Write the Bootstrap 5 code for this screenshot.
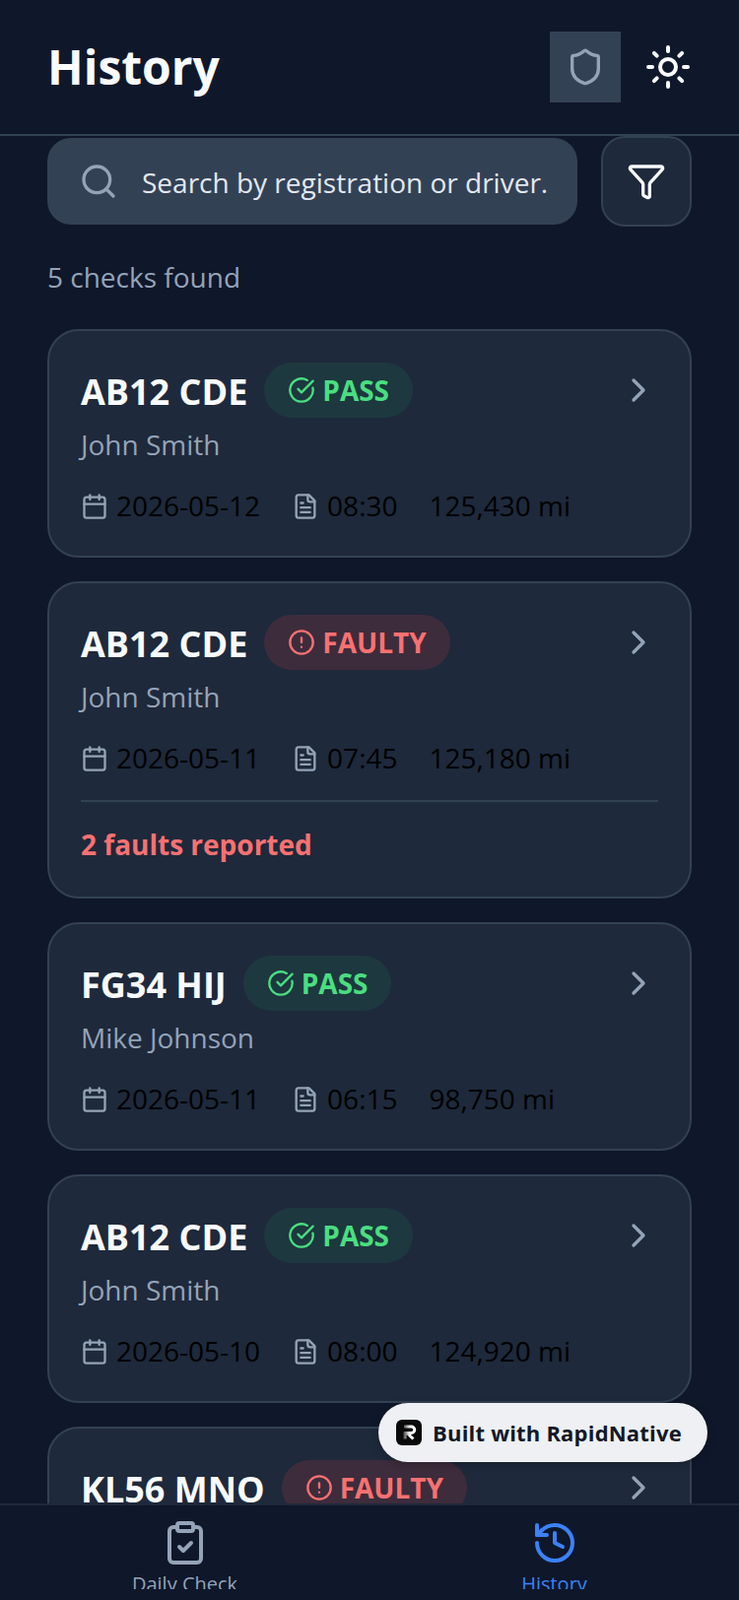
<!DOCTYPE html>
<html lang="en">
<head>
  <meta charset="UTF-8">
  <meta name="viewport" content="width=device-width, initial-scale=1.0">
  <title>History</title>
  <link href="https://cdn.jsdelivr.net/npm/bootstrap@5.3.3/dist/css/bootstrap.min.css" rel="stylesheet" crossorigin="anonymous">
  <script src="https://cdn.jsdelivr.net/npm/bootstrap@5.3.3/dist/js/bootstrap.bundle.min.js" crossorigin="anonymous"></script>
  <style>
    body {
      background: #0f172a;
      font-family: "Open Sans", "Noto Sans", sans-serif;
      color: #000;
      overflow: hidden;
    }
    svg.ico { fill: none; stroke: currentColor; stroke-width: 2; stroke-linecap: round; stroke-linejoin: round; flex-shrink: 0; }

    .app-header { height: 138px; padding: 0 48px; border-bottom: 2px solid #334155; flex-shrink: 0; }
    .app-title { font-size: 48px; line-height: 64px; font-weight: 700; color: #f8fafc; margin: 0; }
    .shield-btn { width: 72px; height: 72px; background: #334155; color: #94a3b8; }
    .sun-ico { color: #f8fafc; }

    .page-scroll { min-height: 0; padding: 0 48px; overflow: hidden; }
    .search-row { gap: 24px; }
    .search-box { height: 88px; margin-top: 2px; background: #334155; border-radius: 24px; padding: 0 30px 0 32px; gap: 24px; color: #94a3b8; }
    .search-box .form-control { background: transparent; border: 0; padding: 2px 0 0; font-size: 28px; line-height: 40px; color: #f1f5f9; box-shadow: none; }
    .search-box .form-control::placeholder { color: #e2e8f0; opacity: 1; }
    .filter-btn { width: 92px; height: 92px; background: #1e293b; border: 2px solid #334155; border-radius: 24px; color: #f8fafc; padding: 0; flex-shrink: 0; }
    .count-line { margin: 31px 0 33px; font-size: 28px; line-height: 40px; color: #94a3b8; }

    .check-card { background: #1e293b; border: 2px solid #334155; border-radius: 32px; padding: 32px; margin-bottom: 24px; color: #000; }
    .reg-text { font-size: 36px; line-height: 48px; font-weight: 700; color: #f8fafc; padding-top: 3px; }
    .status-pill { height: 56px; margin-left: 1px; padding: 0 24px; gap: 7px; border-radius: 28px; font-size: 28px; line-height: 40px; font-weight: 700; }
    .status-pass { background: rgba(34, 197, 94, .1); color: #4ade80; }
    .status-fault { background: rgba(239, 68, 68, .15); color: #f87171; }
    .chev-ico { color: #94a3b8; }
    .driver-text { margin-top: 7px; padding-bottom: 1px; font-size: 28px; line-height: 40px; color: #94a3b8; }
    .meta-row { margin-top: 23px; padding-bottom: 1px; gap: 32px; font-size: 28px; line-height: 36px; }
    .meta-row .ico { color: #94a3b8; margin-top: 2px; }
    .fault-note { margin-top: 24px; padding-top: 23px; padding-bottom: 1px; border-top: 2px solid #334155; font-size: 28px; line-height: 40px; font-weight: 700; color: #f87171; }

    .built-pill { position: absolute; left: 384px; top: 1424px; width: 334px; height: 60px; z-index: 10; background: #eef0f3; border-radius: 30px; gap: 11px; padding-left: 18px; font-size: 22px; letter-spacing: .2px; font-weight: 700; color: #111827; box-shadow: 0 2px 8px rgba(0, 0, 0, .25); }
    .built-logo { width: 26px; height: 26px; background: #0a0a0a; border-radius: 6px; flex-shrink: 0; }

    .tab-bar { height: 98px; background: #0f172a; border-top: 2px solid #1e293b; padding-top: 14px; flex-shrink: 0; }
    .tab-item { height: 71px; overflow: hidden; color: #94a3b8; font-size: 20px; line-height: 28px; }
    .tab-item.active-tab { color: #3b82f6; }
    .tab-item span { margin-top: 4px; }
  </style>
</head>
<body>
  <div class="d-flex flex-column vh-100 position-relative">
    <header class="app-header d-flex align-items-center justify-content-between">
      <h1 class="app-title">History</h1>
      <div class="d-flex align-items-center gap-4">
        <div class="shield-btn d-flex align-items-center justify-content-center">
          <svg class="ico" width="40" height="40" viewBox="0 0 24 24"><path d="M20 13c0 5-3.500 7.500-7.660 8.950a1 1 0 0 1-.67-.01C7.500 20.500 4 18 4 13V6a1 1 0 0 1 1-1c2 0 4.500-1.200 6.240-2.720a1.170 1.170 0 0 1 1.520 0C14.510 3.810 17 5 19 5a1 1 0 0 1 1 1z"/></svg>
        </div>
        <svg class="ico sun-ico" width="48" height="48" viewBox="0 0 24 24"><circle cx="12" cy="12" r="4"/><path d="M12 2v2M12 20v2M4.930 4.930l1.410 1.410M17.660 17.660l1.410 1.410M2 12h2M20 12h2M6.340 17.660l-1.410 1.410M19.070 4.930l-1.410 1.410"/></svg>
      </div>
    </header>

    <main class="page-scroll flex-grow-1">
      <div class="search-row d-flex align-items-start">
        <div class="search-box d-flex align-items-center flex-grow-1">
          <svg class="ico" width="40" height="40" viewBox="0 0 24 24"><circle cx="11" cy="11" r="8"/><path d="m21 21-4.300-4.300"/></svg>
          <input type="text" class="form-control" placeholder="Search by registration or driver...">
        </div>
        <button type="button" class="filter-btn btn d-flex align-items-center justify-content-center">
          <svg class="ico" width="40" height="40" viewBox="0 0 24 24"><path d="M10 20a1 1 0 0 0 .553.895l2 1A1 1 0 0 0 14 21v-7a2 2 0 0 1 .517-1.341L21.740 4.670A1 1 0 0 0 21 3H3a1 1 0 0 0-.742 1.670l7.225 7.989A2 2 0 0 1 10 14z"/></svg>
        </button>
      </div>

      <p class="count-line">5 checks found</p>

      <div id="checkList"></div>
    </main>

    <div class="built-pill d-flex align-items-center">
      <div class="built-logo d-flex align-items-center justify-content-center">
        <svg width="18" height="18" viewBox="0 0 18 18" fill="none"><defs><linearGradient id="logoFade" x1="0" x2="1" y1="0" y2="0"><stop offset="0" stop-color="#555"/><stop offset=".55" stop-color="#fff"/></linearGradient></defs><path d="M4 3h7.500a3 3 0 0 1 0 6.500H7l6.500 6M5 9v6.500" stroke="url(#logoFade)" stroke-width="3"/></svg>
      </div>
      Built with RapidNative
    </div>

    <nav class="tab-bar d-flex">
      <div class="tab-item d-flex flex-column align-items-center w-50">
        <svg class="ico" width="48" height="48" viewBox="0 0 24 24"><rect x="8" y="2" width="8" height="4" rx="1"/><path d="M16 4h2a2 2 0 0 1 2 2v14a2 2 0 0 1-2 2H6a2 2 0 0 1-2-2V6a2 2 0 0 1 2-2h2"/><path d="m9 14 2 2 4-4"/></svg>
        <span>Daily Check</span>
      </div>
      <div class="tab-item active-tab d-flex flex-column align-items-center w-50">
        <svg class="ico" width="48" height="48" viewBox="0 0 24 24"><path d="M3 12a9 9 0 1 0 9-9 9.750 9.750 0 0 0-6.740 2.740L3 8"/><path d="M3 3v5h5"/><path d="M12 7v5l4 2"/></svg>
        <span>History</span>
      </div>
    </nav>
  </div>

  <script>
    const checks = [
      { reg: "AB12 CDE", status: "PASS", driver: "John Smith", date: "2026-05-12", time: "08:30", miles: "125,430 mi" },
      { reg: "AB12 CDE", status: "FAULTY", driver: "John Smith", date: "2026-05-11", time: "07:45", miles: "125,180 mi", faults: "2 faults reported" },
      { reg: "FG34 HIJ", status: "PASS", driver: "Mike Johnson", date: "2026-05-11", time: "06:15", miles: "98,750 mi" },
      { reg: "AB12 CDE", status: "PASS", driver: "John Smith", date: "2026-05-10", time: "08:00", miles: "124,920 mi" },
      { reg: "KL56 MNO", status: "FAULTY", driver: "Sarah Brown", date: "2026-05-10", time: "07:30", miles: "67,210 mi" }
    ];

    const passIcon = '<svg class="ico" width="28" height="28" viewBox="0 0 24 24"><path d="M21.801 10A10 10 0 1 1 17 3.335"/><path d="m9 11 3 3L22 4"/></svg>';
    const faultIcon = '<svg class="ico" width="28" height="28" viewBox="0 0 24 24"><circle cx="12" cy="12" r="10"/><path d="M12 8v4M12 16h.01"/></svg>';
    const calIcon = '<svg class="ico" width="28" height="28" viewBox="0 0 24 24"><path d="M8 2v4M16 2v4"/><rect x="3" y="4" width="18" height="18" rx="2"/><path d="M3 10h18"/></svg>';
    const fileIcon = '<svg class="ico" width="28" height="28" viewBox="0 0 24 24"><path d="M15 2H6a2 2 0 0 0-2 2v16a2 2 0 0 0 2 2h12a2 2 0 0 0 2-2V7Z"/><path d="M14 2v4a2 2 0 0 0 2 2h4"/><path d="M10 9H8M16 13H8M16 17H8"/></svg>';
    const chevIcon = '<svg class="ico chev-ico" width="40" height="40" viewBox="0 0 24 24"><path d="m9 18 6-6-6-6"/></svg>';

    document.getElementById("checkList").innerHTML = checks.map(c => `
      <div class="check-card">
        <div class="d-flex align-items-center justify-content-between">
          <div class="d-flex align-items-center gap-3">
            <span class="reg-text">${c.reg}</span>
            <span class="status-pill d-flex align-items-center ${c.status === "PASS" ? "status-pass" : "status-fault"}">${c.status === "PASS" ? passIcon : faultIcon}${c.status}</span>
          </div>
          ${chevIcon}
        </div>
        <div class="driver-text">${c.driver}</div>
        <div class="meta-row d-flex align-items-center">
          <div class="d-flex align-items-center gap-2">${calIcon}${c.date}</div>
          <div class="d-flex align-items-center gap-2">${fileIcon}${c.time}</div>
          <div>${c.miles}</div>
        </div>
        ${c.faults ? `<div class="fault-note">${c.faults}</div>` : ""}
      </div>`).join("");
  </script>
</body>
</html>
